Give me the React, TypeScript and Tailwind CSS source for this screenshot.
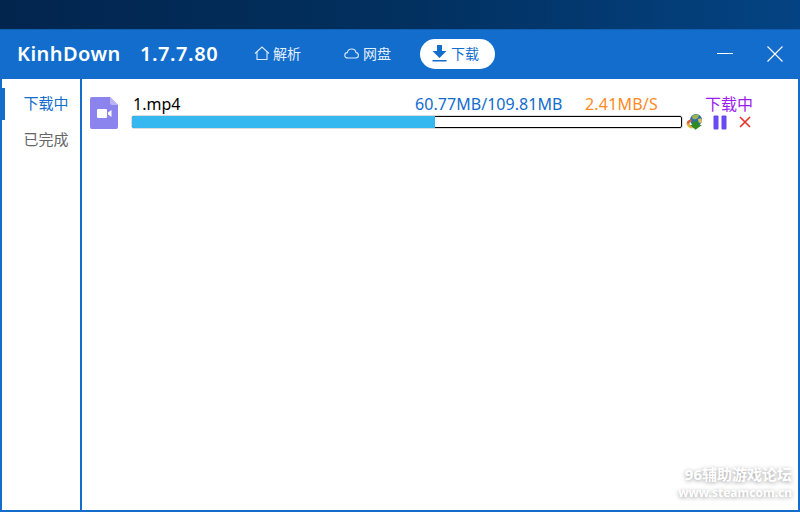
import React from "react";

const font = "font-['Noto_Sans','Noto_Sans_CJK_SC',sans-serif]";

const HomeIcon = () => (
  <svg width="16" height="15" viewBox="0 0 16 15" fill="none" stroke="#dbe9fa" strokeWidth="1.1">
    <path d="M1 7.500 8 1l7 6.500M3 6v7.500h10V6" />
  </svg>
);

const CloudIcon = () => (
  <svg width="15" height="11" viewBox="0 0 15 11" fill="none" stroke="#dbe9fa" strokeWidth="1.1">
    <path d="M4 10C2 10 .8 8.800.8 7.200.8 5.700 2 4.600 3.300 4.600 3.800 2.500 5.500 1 7.700 1c2.400 0 4 1.600 4.300 3.600 1.400.1 2.400 1.200 2.400 2.700S13.200 10 11.800 10z" />
  </svg>
);

const DownloadIcon = () => (
  <svg width="15" height="17" viewBox="0 0 15 17" fill="#126dcd">
    <path d="M5 0h5v6h4.500l-7 7-7-7H5z" />
    <rect x="0.500" y="15" width="14" height="1.500" />
  </svg>
);

const VideoFile = () => (
  <svg width="28" height="32" viewBox="0 0 28 32" className="mt-[4px] shrink-0">
    <path d="M2 0h18l8 8v22a2 2 0 0 1-2 2H2a2 2 0 0 1-2-2V2a2 2 0 0 1 2-2z" fill="#8b83ee" />
    <path d="M20 0l8 8h-6a2 2 0 0 1-2-2z" fill="#b9b4f6" />
    <rect x="7" y="12" width="10" height="9" rx="1" fill="#fff" />
    <path d="M18 15.500 21.500 13v7L18 17.500z" fill="#fff" />
  </svg>
);

const IdmIcon = () => (
  <svg width="17" height="16" viewBox="0 0 17 16">
    <circle cx="10" cy="6" r="6" fill="#2f6fa8" />
    <path d="M6 2.500C8 .5 11 0 13 1l-1 3-3 1.500-2.500-1z" fill="#9db54e" />
    <path d="M12 5c2-1 3.500-.5 4 1l-.5 3-3-.5z" fill="#d8c45a" />
    <path d="M.5 9.500C1 6.500 3.500 5 6 5.500L5 8C3.500 8 3 9 3.500 10.500z" fill="#d9603c" />
    <path d="M.5 10c1 3 3.500 4.500 6 4.500l1-2.500C5.500 12 4 11 3.500 9.500z" fill="#e0b33c" />
    <path d="M6.500 7.500h6V11H16l-6.500 4.800L4 11h2.500z" fill="#2f8a1f" />
  </svg>
);

const PauseIcon = () => (
  <svg width="14" height="15" viewBox="0 0 14 15" fill="#6a4bf0">
    <rect x="0.500" y="0.500" width="5" height="14" rx="1" />
    <rect x="8.500" y="0.500" width="5" height="14" rx="1" />
  </svg>
);

const CloseIcon = () => (
  <svg width="12" height="12" viewBox="0 0 12 12" stroke="#e2382c" strokeWidth="1.7" fill="none">
    <path d="M1 1l10 10M11 1 1 11" />
  </svg>
);

const WindowClose = () => (
  <svg width="16" height="16" viewBox="0 0 16 16" stroke="#fff" strokeWidth="1.1" fill="none">
    <path d="M.5.500l15 15M15.500.500l-15 15" />
  </svg>
);

const App: React.FC = () => {
  return (
    <div className={`${font} relative w-[800px] h-[512px] overflow-hidden flex flex-col bg-gradient-to-r from-[#02254e] via-[#02305f] to-[#044383]`}>
      <div className="h-[29px] shrink-0" />

      {/* title bar */}
      <div className="h-[50px] shrink-0 pb-[2px] bg-[#126dcd] border-t border-[#0f5fb3] flex items-center text-white">
        <span className="ml-[17px] w-[123px] text-[20px] font-semibold tracking-[0.45px]">KinhDown</span>
        <span className="w-[114px] text-[20px] font-semibold tracking-[0.55px]">1.7.7.80</span>
        <div className="w-[90px] flex items-center gap-[3px] text-[14px] text-[#e6f0fb]">
          <HomeIcon />
          <span>解析</span>
        </div>
        <div className="w-[76px] flex items-center gap-[4px] text-[14px] text-[#e6f0fb]">
          <CloudIcon />
          <span>网盘</span>
        </div>
        <div className="w-[75px] h-[30px] pr-[4px] rounded-full bg-white text-[#126dcd] flex items-center justify-center gap-[4px] text-[14px]">
          <DownloadIcon />
          <span>下载</span>
        </div>
        <div className="flex-1" />
        <div className="w-[16px] h-px bg-white mr-[34px]" />
        <div className="mr-[17px]">
          <WindowClose />
        </div>
      </div>

      {/* body */}
      <div className="flex-1 flex bg-white border-2 border-t-0 border-[#126dcd]">
        <div className="w-[80px] shrink-0 border-r-2 border-[#126dcd] flex flex-col text-[15px]">
          <div className="h-[36px] flex items-center justify-center pl-[10px] text-[#126dcd] relative">
            <div className="absolute left-0 top-[9px] h-[32px] w-[3px] bg-[#126dcd]" />
            <span className="mt-[13px]">下载中</span>
          </div>
          <div className="h-[36px] flex items-center justify-center pl-[10px] text-[#666666]">
            <span className="mt-[13px]">已完成</span>
          </div>
        </div>

        <div className="flex-1 flex items-start pt-[14px] pl-[8px]">
          <VideoFile />
          <div className="ml-[13px] w-[552px]">
            <div className="h-[22px] flex items-center text-[16px]">
              <span className="ml-[2px] w-[282px] text-black">1.mp4</span>
              <span className="w-[170px] text-[#126dcd] tracking-[0.05px]">60.77MB/109.81MB</span>
              <span className="text-[#ff8a1e] tracking-[0.2px]">2.41MB/S</span>
            </div>
            <div className="h-[14px] rounded-[3px] border border-[#dddddd]">
              <div className="relative h-full rounded-[2px] border border-black bg-white">
                <div
                  className="absolute -left-px -top-px -bottom-px rounded-l-[2px] bg-[#35b8f0]"
                  style={{ width: `${(60.77 / 109.81) * 100}%` }}
                />
              </div>
            </div>
          </div>
          <div className="ml-[3px] flex flex-col">
            <span className="ml-[19px] h-[21px] text-[16px] leading-[22px] text-[#9b1df0]">下载中</span>
            <div className="flex items-center">
              <IdmIcon />
              <div className="ml-[10px]">
                <PauseIcon />
              </div>
              <div className="ml-[12px]">
                <CloseIcon />
              </div>
            </div>
          </div>
        </div>
      </div>

      {/* forum watermark */}
      <div className="absolute right-[8px] top-[464px] text-right whitespace-nowrap text-white font-bold [text-shadow:0_1px_4px_#9a9a9a]">
        <div className="text-[15px] leading-[20px]">96辅助游戏论坛</div>
        <div className="text-[12px] leading-[17px]">www.steamcom.cn</div>
      </div>
    </div>
  );
};

export default App;
